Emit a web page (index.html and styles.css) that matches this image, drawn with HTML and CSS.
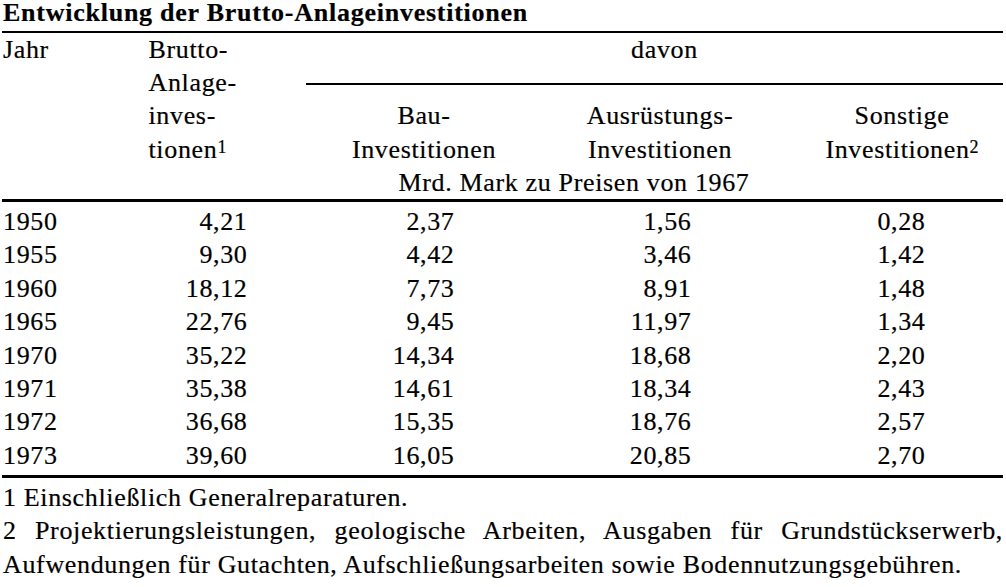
FILE: index.html
```html
<!DOCTYPE html>
<html lang="de">
<head>
<meta charset="utf-8">
<title>Entwicklung der Brutto-Anlageinvestitionen</title>
<link rel="stylesheet" href="styles.css">
</head>
<body>
<div class="page">
  <h1 class="title">Entwicklung der Brutto-Anlageinvestitionen</h1>
  <div class="head">
    <div class="h-jahr">Jahr</div>
    <div class="h-brutto">Brutto-<br>Anlage-<br>inves-<br>tionen<sup class="fn">1</sup></div>
    <div class="h-davon">davon</div>
    <div class="h-rule"></div>
    <div class="h-bau">Bau-<br>Investitionen</div>
    <div class="h-aus">Ausrüstungs-<br>Investitionen</div>
    <div class="h-son">Sonstige<br>Investitionen<sup class="fn">2</sup></div>
    <div class="h-unit">Mrd. Mark zu Preisen von 1967</div>
  </div>
  <div class="body">
    <div class="c1">1950</div><div class="c2">4,21</div><div class="c3">2,37</div><div class="c4">1,56</div><div class="c5">0,28</div>
    <div class="c1">1955</div><div class="c2">9,30</div><div class="c3">4,42</div><div class="c4">3,46</div><div class="c5">1,42</div>
    <div class="c1">1960</div><div class="c2">18,12</div><div class="c3">7,73</div><div class="c4">8,91</div><div class="c5">1,48</div>
    <div class="c1">1965</div><div class="c2">22,76</div><div class="c3">9,45</div><div class="c4">11,97</div><div class="c5">1,34</div>
    <div class="c1">1970</div><div class="c2">35,22</div><div class="c3">14,34</div><div class="c4">18,68</div><div class="c5">2,20</div>
    <div class="c1">1971</div><div class="c2">35,38</div><div class="c3">14,61</div><div class="c4">18,34</div><div class="c5">2,43</div>
    <div class="c1">1972</div><div class="c2">36,68</div><div class="c3">15,35</div><div class="c4">18,76</div><div class="c5">2,57</div>
    <div class="c1">1973</div><div class="c2">39,60</div><div class="c3">16,05</div><div class="c4">20,85</div><div class="c5">2,70</div>
  </div>
  <div class="notes">
    <p class="note">1 Einschließlich Generalreparaturen.</p>
    <p class="note">2 Projektierungsleistungen, geologische Arbeiten, Ausgaben für Grundstückserwerb, Aufwendungen für Gutachten, Aufschließungsarbeiten sowie Bodennutzungsgebühren.</p>
  </div>
</div>
</body>
</html>
```
FILE: styles.css
```css
html, body {
  margin: 0;
  padding: 0;
  background: #ffffff;
}
body {
  font-family: "Liberation Serif", "Times New Roman", serif;
  font-size: 26px;
  letter-spacing: 0.65px;
  color: #000000;
  -webkit-text-stroke: 0.2px #000000;
}
.page {
  width: 1001px;
  margin: 0 0 0 2px;
}
.title {
  margin: 0 0 4.5px 1px;
  font-size: 26px;
  font-weight: bold;
  letter-spacing: 0.75px;
  line-height: 26px;
}
.head, .body {
  display: grid;
  grid-template-columns: 143px 161px 236px 236px 225px;
  line-height: 33.4px;
}
.head {
  grid-template-rows: repeat(5, 33.4px);
  border-top: 2.5px solid #000;
  border-bottom: 3px solid #000;
}
.h-jahr { grid-column: 1; grid-row: 1; padding-left: 1px; }
.h-brutto { grid-column: 2; grid-row: 1 / 5; padding-left: 3.5px; }
.h-davon { grid-column: 3 / 6; grid-row: 1; text-align: center; padding-left: 20px; }
.h-rule {
  grid-column: 3 / 6;
  grid-row: 2;
  align-self: start;
  margin-top: 17px;
  height: 2.5px;
  background: #000;
}
.h-bau { grid-column: 3; grid-row: 3 / 5; text-align: center; }
.h-aus { grid-column: 4; grid-row: 3 / 5; text-align: center; }
.h-son { grid-column: 5; grid-row: 3 / 5; text-align: center; padding-left: 23px; }
.h-unit { grid-column: 2 / 6; grid-row: 5; text-align: center; }
.fn {
  font-size: 18px;
  vertical-align: 5px;
  line-height: 1;
  letter-spacing: 0;
}
.body {
  padding: 2.5px 0 2.5px;
  border-bottom: 3px solid #000;
}
.c1 { padding-left: 1px; }
.c2 { text-align: right; padding-right: 58.5px; }
.c3 { text-align: right; padding-right: 87.5px; }
.c4 { text-align: right; padding-right: 86.5px; }
.c5 { text-align: right; padding-right: 77.5px; }
.notes {
  padding-top: 3.3px;
  line-height: 33.4px;
}
.note {
  margin: 0;
  padding-left: 1px;
  text-align: justify;
}
```
